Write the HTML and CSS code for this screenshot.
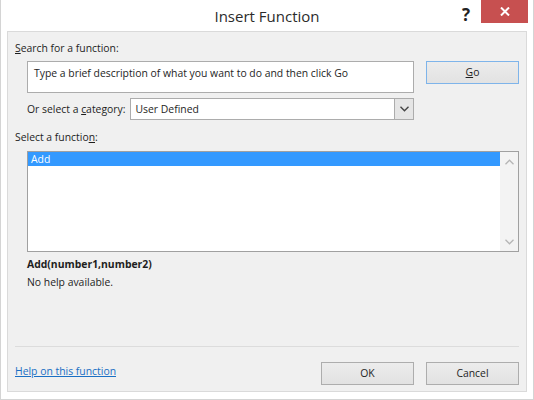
FILE: index.html
```html
<!DOCTYPE html>
<html lang="en">

<head>
    <meta charset="UTF-8">
    <title>Insert Function</title>
    <link rel="stylesheet" href="styles.css">
</head>

<body>
    <div class="janela">
        <div class="barra-titulo">
            <span class="titulo">Insert Function</span>
            <span class="ajuda">?</span>
            <span class="fechar">
                <svg width="10" height="9" viewBox="0 0 10 9">
                    <path d="M1 0.5 L9 8.5 M9 0.5 L1 8.5" stroke="#fff" stroke-width="2"/>
                </svg>
            </span>
        </div>

        <div class="painel">
            <div class="rotulo"><u>S</u>earch for a function:</div>

            <div class="linha-busca">
                <div class="caixa-busca">Type a brief description of what you want to do and then click Go</div>
                <div class="botao botao-go"><u>G</u>o</div>
            </div>

            <div class="linha-categoria">
                <span>Or select a <u>c</u>ategory:</span>
                <div class="combo">
                    <span class="combo-texto">User Defined</span>
                    <span class="combo-seta">
                        <svg width="9" height="6" viewBox="0 0 9 6">
                            <path d="M0.5 0.8 L4.5 4.8 L8.5 0.8" fill="none" stroke="#444" stroke-width="1.4"/>
                        </svg>
                    </span>
                </div>
            </div>

            <div class="rotulo rotulo-lista">Select a functio<u>n</u>:</div>

            <div class="lista">
                <div class="itens">
                    <div class="item selecionado">Add</div>
                </div>
                <div class="rolagem">
                    <svg width="9" height="6" viewBox="0 0 9 6">
                        <path d="M0.5 5.2 L4.5 1.2 L8.5 5.2" fill="none" stroke="#b5b5b5" stroke-width="1.3"/>
                    </svg>
                    <svg width="9" height="6" viewBox="0 0 9 6">
                        <path d="M0.5 0.8 L4.5 4.8 L8.5 0.8" fill="none" stroke="#b5b5b5" stroke-width="1.3"/>
                    </svg>
                </div>
            </div>

            <div class="sintaxe">Add(number1,number2)</div>
            <div class="descricao">No help available.</div>

            <hr class="separador">

            <div class="rodape">
                <a href="#" class="link-ajuda">Help on this function</a>
                <div class="botoes">
                    <div class="botao">OK</div>
                    <div class="botao">Cancel</div>
                </div>
            </div>
        </div>
    </div>
</body>

</html>
```

FILE: styles.css
```css
body {
    margin: 0;
    font-family: "Open Sans", "Noto Sans", sans-serif;
    font-size: 10.4px;
    color: #1e1e1e;
}

.janela {
    width: 534px;
    height: 400px;
    box-sizing: border-box;
    border: 1px solid #d4d4d4;
    border-top: none;
    background-color: #fff;
}

.barra-titulo {
    position: relative;
    height: 31px;
    text-align: center;
}

.titulo {
    display: inline-block;
    margin-top: 6px;
    font-size: 15px;
    color: #2b2b2b;
}

.ajuda {
    position: absolute;
    left: 461px;
    top: 3px;
    font-size: 17px;
    font-weight: bold;
    color: #222;
}

.fechar {
    position: absolute;
    left: 480px;
    top: 0;
    width: 47px;
    height: 23px;
    background-color: #c75050;
    display: flex;
    align-items: center;
    justify-content: center;
}

.painel {
    margin: 0 6px 0 6px;
    height: 361px;
    box-sizing: border-box;
    border: 1px solid #dadada;
    background-color: #f0f0f0;
    padding: 8px 7px 0 7px;
}

.rotulo {
    height: 16px;
    line-height: 16px;
}

.linha-busca {
    display: flex;
    margin: 5px 0 0 12px;
}

.caixa-busca {
    width: 387px;
    height: 32px;
    box-sizing: border-box;
    background-color: #fff;
    border: 1px solid #acacac;
    padding: 3px 6px;
    line-height: 16px;
}

.botao {
    width: 93px;
    height: 23px;
    box-sizing: border-box;
    border: 1px solid #adadad;
    background: linear-gradient(#ececec, #e2e2e2);
    text-align: center;
    line-height: 21px;
}

.botao-go {
    margin-left: 12px;
    border-color: #7eb4ea;
}

.linha-categoria {
    display: flex;
    align-items: center;
    width: 387px;
    margin: 5px 0 0 12px;
}

.combo {
    display: flex;
    flex: 1;
    margin-left: 4px;
    height: 22px;
    box-sizing: border-box;
    background-color: #fff;
    border: 1px solid #acacac;
}

.combo-texto {
    flex: 1;
    padding-left: 5px;
    line-height: 20px;
}

.combo-seta {
    width: 18px;
    border-left: 1px solid #acacac;
    background-color: #e5e5e5;
    display: flex;
    align-items: center;
    justify-content: center;
}

.rotulo-lista {
    margin-top: 9px;
}

.lista {
    display: flex;
    margin: 6px 0 0 12px;
    width: 492px;
    height: 101px;
    box-sizing: border-box;
    border: 1px solid #a0a0a0;
    background-color: #fff;
}

.itens {
    flex: 1;
}

.item {
    height: 14px;
    line-height: 14px;
    padding-left: 3px;
}

.selecionado {
    background-color: #3399ff;
    color: #fff;
}

.rolagem {
    width: 18px;
    background-color: #f3f3f3;
    display: flex;
    flex-direction: column;
    justify-content: space-between;
    align-items: center;
    padding: 7px 0 6px 0;
}

.sintaxe {
    margin: 4px 0 0 12px;
    font-weight: bold;
    line-height: 16px;
}

.descricao {
    margin: 2px 0 0 12px;
    line-height: 16px;
}

.separador {
    margin: 56px 0 0 0;
    border: none;
    border-top: 1px solid #dcdcdc;
}

.rodape {
    display: flex;
    justify-content: space-between;
    align-items: center;
    margin-top: 15px;
}

.link-ajuda {
    color: #1a6fc4;
    margin-top: -5px;
}

.botoes {
    display: flex;
    gap: 12px;
}
```
